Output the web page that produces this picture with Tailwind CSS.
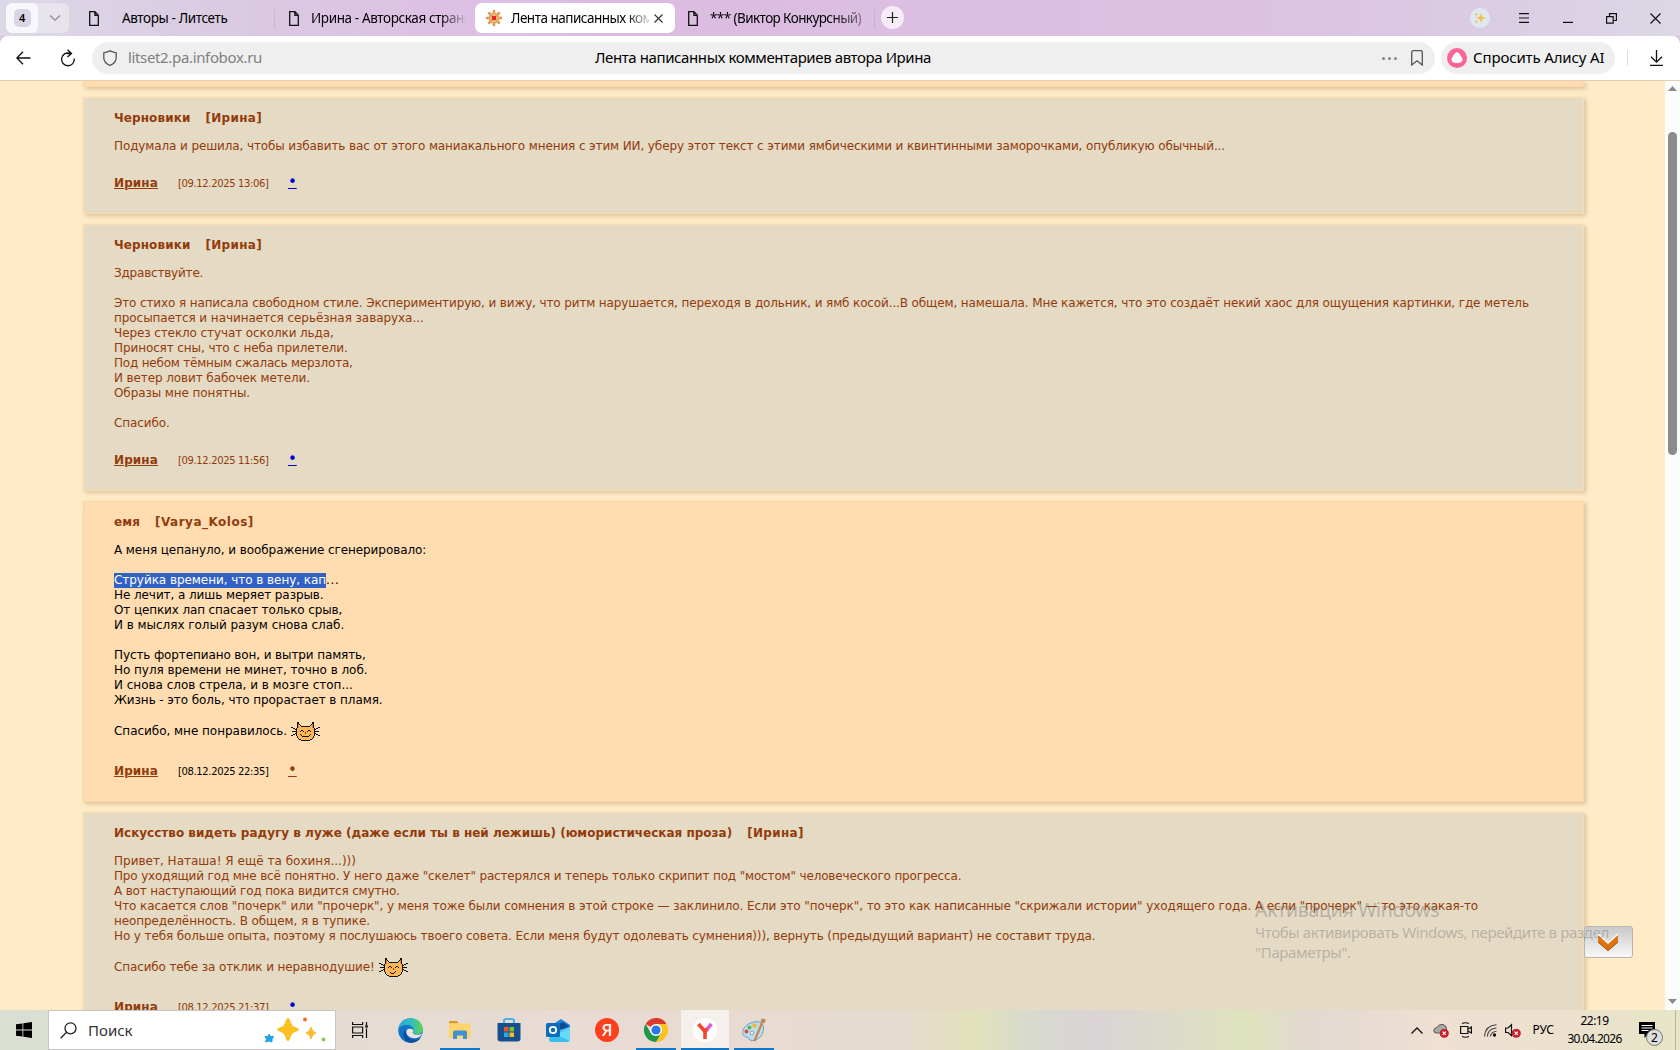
<!DOCTYPE html>
<html lang="ru">
<head>
    <meta charset="UTF-8">
    <meta name="viewport" content="width=device-width, initial-scale=1.0">
    <title>Лента написанных комментариев автора Ирина</title>
    <script src="https://cdn.jsdelivr.net/npm/@tailwindcss/browser@4"></script>
</head>
<body class="w-[1680px] h-[1050px] overflow-hidden bg-[#dcc0e3] font-['Noto_Sans',sans-serif] text-black flex flex-col">

    <!-- Shared shapes -->
    <svg class="hidden">
        <symbol id="page" viewBox="0 0 10 15"><path d="M.7.7h5.2l3.4 3.6v10H.7zM5.9.7v3.6h3.4" fill="none" stroke="#111" stroke-width="1.3"/></symbol>
        <symbol id="cat" viewBox="0 0 29 19">
            <path d="M6 1h1l4 3h7l4-3h1v5l1 3-1 5-4 4h-9l-4-4-1-5 1-3z" fill="#fdb853"/>
            <path d="M7.500 2v4M21.500 2v4" stroke="#e8822a"/>
            <path d="M6.500 0v6M7.500 0v2M8.500 2v1M9.500 3v1M10 4.500h9M22.500 0v6M21.500 0v2M20.500 2v1M19.500 3v1M5.500 6v8M23.500 6v8M6.500 14v2M22.500 14v2M7.500 16v1M21.500 16v1M8 17.500h2M19 17.500h2M10 18.500h9" fill="none" stroke="#111"/>
            <path d="M0 5.500h2M2 6.500h2M4 7.500h1M1 9.500h4M0 13.500h2M2 12.500h2M4 11.500h1M29 5.500h-2M27 6.500h-2M25 7.500h-1M28 9.500h-4M29 13.500h-2M27 12.500h-2M25 11.500h-1" stroke="#111"/>
            <path d="M9 9.500h1M10 8.500h2M12 9.500h1M16 9.500h1M17 8.500h2M19 9.500h1" stroke="#111"/>
            <path d="M14 10.500h1M14.500 11v1" fill="none" stroke="#8c3c10"/>
        </symbol>
        <symbol id="off" viewBox="0 0 10 10"><circle cx="5" cy="5" r="4.800" fill="#c8202f"/><path d="M3.300 3.300l3.400 3.400M6.700 3.300l-3.400 3.400" stroke="#fff" stroke-width="1.200"/></symbol>
    </svg>

    <!-- Tab strip -->
    <header class="h-9 shrink-0 flex items-start pt-[3px] bg-[linear-gradient(90deg,#dcd8e6_0,#dac9e2_250px,#ddc1e4_420px,#dcbce1_650px,#dcc2e3_1300px,#dacde3_1500px,#dcd8e5_1680px)] text-[13.500px] tracking-[-0.38px] whitespace-nowrap">
        <div class="ml-1.5 w-[63px] h-[30px] rounded-md bg-[#e8e4ee] flex items-center">
            <div class="w-8 h-[30px] rounded-md bg-[#f8f7fb] flex items-center justify-center">
                <span class="w-[17px] h-[18px] rounded-[5px] bg-[#dad6e6] text-[11px] font-semibold leading-[18px] text-center">4</span>
            </div>
            <svg class="w-3 h-2 ml-[11px]" viewBox="0 0 12 8"><path d="M1 1.500l5 4.700 5-4.700" fill="none" stroke="#8d8a95" stroke-width="1.300"/></svg>
        </div>
        <div class="ml-5 w-[185px] h-[30px] flex items-center">
            <svg class="w-2.5 h-[15px]"><use href="#page"/></svg>
            <span class="ml-[23px]">Авторы - Литсеть</span>
        </div>
        <div class="w-px h-5 mt-1.5 bg-[#c9b8d2]"></div>
        <div class="w-[200px] h-[30px] pl-3.5 flex items-center">
            <svg class="w-2.5 h-[15px] shrink-0"><use href="#page"/></svg>
            <span class="ml-3 w-[155px] overflow-hidden [mask-image:linear-gradient(90deg,#000_130px,transparent_156px)]">Ирина - Авторская страница</span>
        </div>
        <div class="w-[200px] h-[30px] rounded-[7px] bg-white flex items-center pl-[11px]">
            <svg class="w-4 h-4 shrink-0" viewBox="0 0 16 16">
                <path d="M8 0v16M0 8h16M2.300 2.300l11.400 11.400M13.700 2.300L2.300 13.700" stroke="#df9448" stroke-width="2.400"/>
                <circle cx="8" cy="8" r="5.500" fill="#e9a75c"/><rect x="6" y="6" width="4" height="4" fill="#e3262b"/><path d="M4.500 8h1M10.500 8h1M8 4.500v1M8 10.500v1" stroke="#fff"/>
            </svg>
            <span class="ml-[9px] w-[138px] overflow-hidden tracking-[-0.5px] [mask-image:linear-gradient(90deg,#000_115px,transparent_142px)]">Лента написанных комментариев</span>
            <svg class="w-[9px] h-[9px] ml-[5px]" viewBox="0 0 9 9"><path d="M.5.5l8 8M8.500.5l-8 8" stroke="#333" stroke-width="1.100"/></svg>
        </div>
        <div class="w-[199px] h-[30px] pl-[13px] flex items-center">
            <svg class="w-2.5 h-[15px] shrink-0"><use href="#page"/></svg>
            <span class="ml-3 w-[152px] overflow-hidden tracking-[-0.58px] [mask-image:linear-gradient(90deg,#000_120px,rgba(0,0,0,0.4)_152px)]">*** (Виктор Конкурсный)</span>
        </div>
        <div class="w-px h-5 mt-1.5 bg-[#c9b0d0]"></div>
        <div class="ml-1.5 mt-[3px] w-[23px] h-[23px] rounded-full bg-[#f5ecf7] flex items-center justify-center">
            <svg class="w-[11px] h-[11px]" viewBox="0 0 11 11"><path d="M5.500 0v11M0 5.500h11" stroke="#222" stroke-width="1.200"/></svg>
        </div>
        <div class="ml-auto h-[30px] flex items-center">
            <div class="w-5 h-5 rounded-full bg-[#dfe8ec] flex items-center justify-center">
                <svg class="w-3 h-3" viewBox="0 0 12 12"><path d="M7 1l1.200 3.800L12 6 8.200 7.200 7 11 5.800 7.200 2 6l3.800-1.200zM2.300.5l.5 1.300 1.300.5-1.300.5-.5 1.300-.5-1.300L.5 2.300l1.300-.5zM2.300 8l.5 1.300 1.300.5-1.300.5-.5 1.300-.5-1.300-1.300-.5 1.300-.5z" fill="#f2bd4c"/></svg>
            </div>
            <svg class="h-2.5 w-[10px] ml-[29px]" viewBox="0 0 10 10"><path d="M0 .6h10M0 5h10M0 9.400h10" stroke="#111" stroke-width="1.100"/></svg>
            <svg class="w-2.5 h-2.5 ml-[34px]" viewBox="0 0 10 10"><path d="M0 9.400h10" stroke="#000" stroke-width="1.200"/></svg>
            <svg class="w-[11px] h-[11px] ml-[33px]" viewBox="0 0 11 11"><path d="M.6 3.600h6.600v6.600H.6zM3.500 3.500V.6h6.900v6.900H7.300" fill="none" stroke="#111" stroke-width="1.200"/></svg>
            <svg class="w-[11px] h-[11px] ml-[33px] mr-[19px]" viewBox="0 0 11 11"><path d="M.5.5l10 10M10.500.5l-10 10" stroke="#111" stroke-width="1.200"/></svg>
        </div>
    </header>

    <!-- Toolbar -->
    <div class="h-11 shrink-0 bg-white rounded-t-lg flex items-center text-[15px] whitespace-nowrap">
        <svg class="w-[15px] h-[14px] ml-4" viewBox="0 0 15 14"><path d="M14.500 7H1M7 .8L.9 7 7 13.200" fill="none" stroke="#111" stroke-width="1.300"/></svg>
        <svg class="w-4 h-[18px] ml-[29px]" viewBox="0 0 16 18"><path d="M9.800 4.200A6.400 6.400 0 1 0 14.300 9.500M6.500 4.500h4.700M7.500.8l4 3.700-4 3.600" fill="none" stroke="#111" stroke-width="1.300"/></svg>
        <div class="ml-4 w-[1343px] h-8 rounded-2xl bg-[#efefef] flex items-center pl-[11px] pr-3">
            <svg class="w-[14px] h-4" viewBox="0 0 14 16"><path d="M7 .8c2 1 4 1.500 6.200 2V8c0 3.500-3 6-6.200 7.300C3.800 14 .8 11.500.8 8V2.800C3 2.300 5 1.800 7 .8z" fill="none" stroke="#555" stroke-width="1.300"/></svg>
            <span class="ml-[11px] -mt-px w-[467px] text-[#808080] tracking-[-0.35px]">litset2.pa.infobox.ru</span>
            <span class="-mt-px tracking-[-0.4px]">Лента написанных комментариев автора Ирина</span>
            <span class="ml-auto flex gap-[3px]"><i class="w-[3px] h-[3px] rounded-full bg-[#888]"></i><i class="w-[3px] h-[3px] rounded-full bg-[#888]"></i><i class="w-[3px] h-[3px] rounded-full bg-[#888]"></i></span>
            <svg class="w-3 h-4 ml-[14px]" viewBox="0 0 12 16"><path d="M.7 15V2.500Q.7.7 2.500.7h7q1.800 0 1.800 1.800V15L6 10.800z" fill="none" stroke="#555" stroke-width="1.300"/></svg>
        </div>
        <div class="ml-1.5 w-[174px] h-8 rounded-2xl bg-[#efefef] flex items-center pl-1.5">
            <svg class="w-5 h-5" viewBox="0 0 20 20"><circle cx="10" cy="10" r="10" fill="#fa6496"/><path d="M10 4.200c1.600 0 2.400 1 3.800 3.500 1.500 2.600 2.200 3.800 1.300 5.300S12.500 15 10 15s-4.200-.5-5.100-2-.2-2.700 1.300-5.300C7.600 5.200 8.400 4.200 10 4.200z" fill="#fff"/></svg>
            <span class="ml-1.5 -mt-px tracking-[-0.14px]">Спросить Алису AI</span>
        </div>
        <div class="ml-3 w-px h-4 bg-[#ddd]"></div>
        <svg class="w-[13px] h-4 ml-[22px]" viewBox="0 0 13 16"><path d="M6.500 0v12M1 6.800l5.500 5.400L12 6.800M0 15.300h13" fill="none" stroke="#111" stroke-width="1.300"/></svg>
    </div>

    <!-- Page -->
    <main class="h-[930px] shrink-0 overflow-hidden flex bg-[#ffebc8] border-t border-[#e4cfae] relative">
        <div class="w-[1501px] ml-[83px] flex flex-col gap-2.5 font-['DejaVu_Sans',sans-serif] text-[12px] leading-[15px] tracking-[-0.1px] whitespace-nowrap text-[#933b0b]">
            <article class="h-[6px] shrink-0 bg-[#ffddb1] border border-t-0 border-[#fbd7a6] shadow-[2px_2px_4px_rgba(150,100,50,0.3)]"></article>

            <article class="h-[117px] shrink-0 bg-[#e5dac4] border border-[#fbdcae] shadow-[2px_2px_4px_rgba(150,100,50,0.3)] pl-[30px] pt-[13px]">
                <h3 class="font-bold tracking-[0.1px] flex gap-[15px]"><span>Черновики</span><span class="tracking-[0.3px]">[Ирина]</span></h3>
                <p class="mt-[13px] tracking-[-0.113px]">Подумала и решила, чтобы избавить вас от этого маниакального мнения с этим ИИ, уберу этот текст с этими ямбическими и квинтинными заморочками, опубликую обычный...</p>
                <div class="mt-[22px] flex"><b class="underline tracking-[0.1px] w-16">Ирина</b><span class="text-[10px] tracking-[-0.36px] w-[110px]">[09.12.2025 13:06]</span><span class="underline decoration-1 text-[15px] -mt-px text-[#0000d8]">•</span></div>
            </article>

            <article class="h-[267px] shrink-0 bg-[#e5dac4] border border-[#fbdcae] shadow-[2px_2px_4px_rgba(150,100,50,0.3)] pl-[30px] pt-[13px]">
                <h3 class="font-bold tracking-[0.1px] flex gap-[15px]"><span>Черновики</span><span class="tracking-[0.3px]">[Ирина]</span></h3>
                <p class="mt-[13px]"><span class="tracking-[-0.2px]">Здравствуйте.</span><br><br>
                    <span class="tracking-[-0.126px]">Это стихо я написала свободном стиле. Экспериментирую, и вижу, что ритм нарушается, переходя в дольник, и ямб косой...В общем, намешала. Мне кажется, что это создаёт некий хаос для ощущения картинки, где метель</span><br>
                    <span class="tracking-[-0.06px]">просыпается и начинается серьёзная заваруха...</span><br>
                    Через стекло стучат осколки льда,<br>
                    Приносят сны, что с неба прилетели.<br>
                    <span class="tracking-[-0.21px]">Под небом тёмным сжалась мерзлота,</span><br>
                    И ветер ловит бабочек метели.<br>
                    Образы мне понятны.<br><br>
                    Спасибо.</p>
                <div class="mt-[22px] flex"><b class="underline tracking-[0.1px] w-16">Ирина</b><span class="text-[10px] tracking-[-0.36px] w-[110px]">[09.12.2025 11:56]</span><span class="underline decoration-1 text-[15px] -mt-px text-[#0000d8]">•</span></div>
            </article>

            <article class="h-[301px] shrink-0 bg-[#ffddb1] border border-[#fbd7a6] shadow-[2px_2px_4px_rgba(150,100,50,0.3)] pl-[30px] pt-[13px]">
                <h3 class="font-bold tracking-[0.1px] flex gap-[15px]"><span>емя</span><span class="tracking-[0.5px]">[Varya_Kolos]</span></h3>
                <p class="mt-[13px] text-black tracking-[-0.08px]">А меня цепануло, и воображение сгенерировало:<br><br>
                    <span class="inline-block h-[15px] align-top bg-[#3161c4] text-white tracking-[-0.05px]">Струйка времени, что в вену, кап</span><span class="tracking-[0.6px]">...</span><br>
                    Не лечит, а лишь меряет разрыв.<br>
                    <span class="tracking-[-0.12px]">От цепких лап спасает только срыв,</span><br>
                    <span class="tracking-[-0.03px]">И в мыслях голый разум снова слаб.</span><br><br>
                    <span class="tracking-[-0.11px]">Пусть фортепиано вон, и вытри память,</span><br>
                    <span class="tracking-[-0.04px]">Но пуля времени не минет, точно в лоб.</span><br>
                    <span class="tracking-[-0.02px]">И снова слов стрела, и в мозге стоп...</span><br>
                    Жизнь - это боль, что прорастает в пламя.</p>
                <div class="mt-4 h-[18px] flex text-black"><span class="tracking-[-0.03px] w-[177px]">Спасибо, мне понравилось.</span>
                    <svg class="w-[29px] h-[19px] -mt-0.5" viewBox="0 0 29 19" shape-rendering="crispEdges"><use href="#cat"/><path d="M9 12.500h1M19 12.500h1M10 13.500h1M18 13.500h1M11 14.500h7" stroke="#111"/></svg>
                </div>
                <div class="mt-[22px] flex"><b class="underline tracking-[0.1px] w-16">Ирина</b><span class="text-[10px] tracking-[-0.36px] w-[110px] text-black">[08.12.2025 22:35]</span><span class="underline decoration-1 text-[15px] -mt-px">•</span></div>
            </article>

            <article class="h-[300px] shrink-0 bg-[#e5dac4] border border-[#fbdcae] shadow-[2px_2px_4px_rgba(150,100,50,0.3)] pl-[30px] pt-[13px]">
                <h3 class="font-bold tracking-normal flex gap-[15px]"><span>Искусство видеть радугу в луже (даже если ты в ней лежишь) (юмористическая проза)</span><span class="tracking-[0.3px]">[Ирина]</span></h3>
                <p class="mt-[13px]"><span class="tracking-[0.01px]">Привет, Наташа! Я ещё та бохиня...)))</span><br>
                    <span class="tracking-[-0.155px]">Про уходящий год мне всё понятно. У него даже "скелет" растерялся и теперь только скрипит под "мостом" человеческого прогресса.</span><br>
                    <span class="tracking-[-0.17px]">А вот наступающий год пока видится смутно.</span><br>
                    <span class="tracking-[-0.088px]">Что касается слов "почерк" или "прочерк", у меня тоже были сомнения в этой строке — заклинило. Если это "почерк", то это как написанные "скрижали истории" уходящего года. А если "прочерк" — то это какая-то</span><br>
                    неопределённость. В общем, я в тупике.<br>
                    <span class="tracking-[-0.115px]">Но у тебя больше опыта, поэтому я послушаюсь твоего совета. Если меня будут одолевать сумнения))), вернуть (предыдущий вариант) не составит труда.</span></p>
                <div class="mt-4 h-[18px] flex"><span class="tracking-[-0.13px] w-[265px]">Спасибо тебе за отклик и неравнодушие!</span>
                    <svg class="w-[29px] h-[19px] -mt-0.5" viewBox="0 0 29 19" shape-rendering="crispEdges"><use href="#cat"/><path d="M11 14.500h1M12 15.500h3M15 14.500h1M16 13.500h1" stroke="#111"/></svg>
                </div>
                <div class="mt-[22px] flex"><b class="underline tracking-[0.1px] w-16">Ирина</b><span class="text-[10px] tracking-[-0.36px] w-[110px]">[08.12.2025 21:37]</span><span class="underline decoration-1 text-[15px] -mt-px text-[#0000d8]">•</span></div>
            </article>
        </div>

        <!-- Scrollbar -->
        <div class="ml-auto w-[15px] bg-[#fcfcfc] flex flex-col items-center pt-[5px] pb-1.5">
            <svg class="w-[9px] h-[5px]" viewBox="0 0 9 5"><path d="M0 5L4.500 0 9 5z" fill="#8a8a8a"/></svg>
            <div class="mt-[41px] w-[9px] h-[323px] rounded-full bg-[#8b8b8b]"></div>
            <svg class="w-[9px] h-[5px] mt-auto" viewBox="0 0 9 5"><path d="M0 0h9L4.500 5z" fill="#8a8a8a"/></svg>
        </div>

        <!-- Scroll down button -->
        <div class="absolute left-[1584px] top-[845px] w-[49px] h-[32px] rounded-[3px] border border-[#b9b5ad] bg-linear-to-b from-[#c9c9c9] to-[#f8f8f8] flex items-center justify-center pr-px">
            <svg class="w-5 h-[18px]" viewBox="0 0 20 18"><path d="M0 1l10 9L20 1v8l-10 9L0 9z" fill="#df7411"/><path d="M0 1l10 9L20 1" fill="none" stroke="#fff" stroke-width="1.500"/><path d="M0 9l10 8.500L20 9" fill="none" stroke="#a04d08"/></svg>
        </div>

        <!-- Activation watermark -->
        <div class="absolute left-[1255px] top-[816px] text-[#7d7d7d]/45 whitespace-nowrap">
            <div class="text-[19.500px] leading-[26px] tracking-[-0.3px]">Активация Windows</div>
            <div class="-mt-px text-[15px] leading-5 tracking-[-0.37px]">Чтобы активировать Windows, перейдите в раздел<br>"Параметры".</div>
        </div>
    </main>

    <!-- Taskbar -->
    <footer class="h-10 shrink-0 flex items-center bg-[linear-gradient(90deg,#d9dfd3_0,#e4dcd2_340px,#e8dbd4_600px,#e6dbd0_900px,#e1e2bb_975px,#d7dacd_1030px,#d9d3d5_1090px,#dcdcc8_1180px,#dee3bd_1245px,#e2d9d1_1310px,#efe0d2_1440px,#ece1cf_1560px,#e6e6c6_1680px)]">
        <svg class="w-4 h-4 ml-4" viewBox="0 0 16 16"><path d="M0 2.300L6.500 1.400v6.200H0zM7.300 1.200L16 0v7.600H7.300zM0 8.400h6.500v6.200L0 13.700zM7.300 8.400H16V16l-8.700-1.200z" fill="#000"/></svg>
        <div class="ml-4 w-[288px] h-10 bg-white border border-[#c6c6c6] flex items-center pl-[11px]">
            <svg class="w-[17px] h-[17px]" viewBox="0 0 17 17"><circle cx="10.500" cy="6.300" r="5.500" fill="none" stroke="#222" stroke-width="1.300"/><path d="M6.600 10.200L.6 16.300" stroke="#222" stroke-width="1.300"/></svg>
            <span class="ml-[11px] text-[15px] text-[#333]">Поиск</span>
            <svg class="ml-auto mr-[9px] w-[62px] h-[26px]" viewBox="0 0 62 26">
                <path d="M24 1q1.500 0 3 5 1 3 4 4 4 1.300 4 2.500t-4 2.500q-3 1-4 4-1.500 5-3 5t-3-5q-1-3-4-4-4-1.300-4-2.500t4-2.500q3-1 4-4 1.500-5 3-5z" fill="#fcc121"/>
                <path d="M47 10q1 5 5 6-4 1-5 6-1-5-5-6 4-1 5-6z" fill="#fbb92c" stroke="#fbb92c" stroke-linejoin="round"/>
                <path d="M5 17l1.500 2.500 3 0-1.500 3 0 2.500-3-1-3.500 1 1-3-1.500-2.500 3 0z" fill="#1da4e8" stroke="#1da4e8" stroke-linejoin="round"/>
                <circle cx="41" cy="2.500" r="2" fill="#ee6c3a"/><circle cx="59.500" cy="22.500" r="2" fill="#8ccb53"/>
            </svg>
        </div>
        <svg class="w-4 h-4 ml-4" viewBox="0 0 16 16"><path d="M.6 0v2.500h10V0M.6 16v-2.500h10V16M.6 5h10v6H.6zM14.500 0v3M14.500 6.500V16" fill="none" stroke="#111" stroke-width="1.200"/><path d="M13.300 3.200h2.500v2.500h-2.500z" fill="#111"/></svg>
        <svg class="w-[25px] h-[25px] ml-[30px]" viewBox="0 0 25 25">
            <defs><linearGradient id="e1" x2="1"><stop offset="0" stop-color="#2aa7e4"/><stop offset=".6" stop-color="#35c1b5"/><stop offset="1" stop-color="#64d34c"/></linearGradient></defs>
            <circle cx="12.500" cy="12.500" r="12.200" fill="#1273c9"/>
            <path d="M.5 11C1.500 4.500 6.500.3 12.500.3c7 0 12.200 5 12.200 10.200 0 4-3 6-6.200 6-2.600 0-4-.8-3.800-1.800.2-.7 1-1.200 1-2.700C15.700 9 12.500 7 9 7 5 7 2 8.500.5 11z" fill="url(#e1)"/>
            <path d="M8.200 12.500c-1 5 3 9.500 8 9.300 2.800 0 5-.8 6.800-2.300-2.300 3.700-6.500 5.500-11 5.200-4-.8-7-4.500-6.700-8.200.2-2.300 1.300-4 2.900-4z" fill="#0c4f9b"/>
            <path d="M8.500 12.500c1-2.500 6-2.500 7 0-.2 1.300-1 1.500-.8 2.500.3 1 2 1.800 4.500 1.800 2 0 3.500-.7 4.700-1.600-.3 2.500-3 4.800-6.900 5-5 .1-9.500-3-8.500-7.700z" fill="#f0e3dc"/>
        </svg>
        <div class="ml-[17px] w-10 h-10 flex flex-col items-center pt-[10px] border-b-2 border-[#1478c8]">
            <svg class="w-[22px] h-5" viewBox="0 0 22 20"><path d="M0 1h8l2 2.500H0z" fill="#d79c22"/><path d="M0 3.500h21.500V18H0z" fill="#fdd56a"/><path d="M4 19v-6.500q0-2 2-2h10q2 0 2 2V19h-4v-3.500H8V19z" fill="#3f92d2"/></svg>
        </div>
        <svg class="w-6 h-6 ml-[17px]" viewBox="0 0 24 24"><path d="M7 6V3q0-2 2-2h6q2 0 2 2v3" fill="none" stroke="#45b3e8" stroke-width="2"/><path d="M.5 5h23v15.500q0 3-3 3h-17q-3 0-3-3z" fill="#17508f"/><path d="M7 9h4.500v4.500H7z" fill="#f1512b"/><path d="M12.500 9H17v4.500h-4.500z" fill="#80c12d"/><path d="M7 14.500h4.500V19H7z" fill="#2ba9ea"/><path d="M12.500 14.500H17V19h-4.500z" fill="#fdba1b"/></svg>
        <svg class="w-6 h-[23px] ml-[25px]" viewBox="0 0 24 23"><path d="M6 6l9-6 9 6v4L14 16 6 12z" fill="#1489d8"/><path d="M12 5l5-2 6 4-9 6z" fill="#0c4b94"/><path d="M6 13l18-5v12q0 3-3 3H5q-2 0-2-3z" fill="#38bff0"/><path d="M24 8v14L10 16z" fill="#68d8f8"/><rect y="4" width="14" height="14" rx="1.500" fill="#0f6cbd"/><circle cx="7" cy="11" r="3.200" fill="none" stroke="#fff" stroke-width="1.800"/></svg>
        <div class="ml-[25px] w-6 h-6 rounded-full bg-[#fc3f1d] text-white text-[17px] leading-6 font-medium text-center">Я</div>
        <div class="ml-[17px] w-10 h-10 flex flex-col items-center pt-2 border-b-2 border-[#1478c8]">
            <svg class="w-6 h-6" viewBox="0 0 24 24"><path d="M12 12L1.600 6A12 12 0 0 1 22.400 6z" fill="#db3b2c"/><path d="M12 12V6h10.400A12 12 0 0 1 12 24z" fill="#fcc31e"/><path d="M12 12l5.200 3L12 24A12 12 0 0 1 1.600 6L6.800 15z" fill="#229547"/><path d="M12 6h10.400A12 12 0 0 0 12 0z" fill="#db3b2c"/><circle cx="12" cy="12" r="6" fill="#fff"/><circle cx="12" cy="12" r="4.600" fill="#2b78e8"/></svg>
        </div>
        <div class="ml-[5px] w-12 h-10 bg-[#f6f0ec] flex flex-col items-center pt-2 border-b-2 border-[#1478c8]">
            <svg class="w-6 h-6" viewBox="0 0 24 24"><circle cx="12" cy="12" r="12" fill="#fff"/><path d="M5.500 6l6.500 7.500V21" fill="none" stroke="#f4452b" stroke-width="3.600"/><path d="M12 13.500L18.500 6" stroke="#e35bd0" stroke-width="3.600"/><path d="M11.500 14l2.700-3" stroke="#f4452b" stroke-width="3.600"/></svg>
        </div>
        <div class="ml-[5px] w-10 h-10 flex flex-col items-center pt-2 border-b-2 border-[#1478c8]">
            <svg class="w-6 h-6" viewBox="0 0 24 24"><path d="M12 4c6-1.500 10 1.500 9.500 7.500S16 22.500 10 22.500c-3.500 0-3-3-5.500-3.500S0 17 .8 13C2 8 7 5 12 4z" fill="#b9dcef" stroke="#6f9fbe"/><circle cx="4.500" cy="13.500" r="1.900" fill="#dd4a3c"/><circle cx="7.500" cy="9.500" r="2" fill="#59b64b"/><circle cx="12.500" cy="7.500" r="2.200" fill="#f2b632"/><circle cx="10" cy="15" r="1.800" fill="#f4efe9" stroke="#7c99ab" stroke-width=".8"/><path d="M20 5l-7.500 18" stroke="#c98648" stroke-width="2.200"/><path d="M18.500 4q0-3 2-3.500l3 1q.5 2.500-2 4z" fill="#b98a58"/></svg>
        </div>

        <!-- Tray -->
        <div class="ml-auto h-10 flex items-center text-[12px]">
            <svg class="w-3 h-[7px]" viewBox="0 0 12 7"><path d="M.5 6.500L6 1l5.500 5.500" fill="none" stroke="#111" stroke-width="1.300"/></svg>
            <svg class="w-4 h-[15px] ml-2.5" viewBox="0 0 16 15"><path d="M3 10Q0 9.500 1 6.500 2 4.500 4 4.500 6 .5 10 1.500q3.500 1 3.500 4V10z" fill="#a9a9a9" stroke="#555"/><use href="#off" x="6.500" y="5.500" width="9.500" height="9.500"/></svg>
            <svg class="w-3 h-4 ml-[11px]" viewBox="0 0 12 16"><path d="M.6 4.500h7.300v7H.6zM8 7l3.400-2v6L8 9M2 1.500q3.500-1.500 7 0M2 14.500q3.500 1.500 7 0" fill="none" stroke="#111" stroke-width="1.200"/></svg>
            <svg class="w-[13px] h-[13px] ml-3" viewBox="0 0 13 13"><path d="M.5 12.500Q1 1.500 12.500.7M3.300 12.500Q4 4.500 12.500 4M6.300 12.500Q7 8 12.500 7.300" fill="none" stroke="#444" stroke-width="1.100"/><circle cx="10.500" cy="11" r="1.700" fill="#111"/></svg>
            <svg class="w-4 h-[15px] ml-2" viewBox="0 0 16 15"><path d="M.6 5h2.500L6.500 1.700v11L3.100 9.500H.6z" fill="none" stroke="#111" stroke-width="1.200"/><use href="#off" x="6.500" y="5.500" width="9.500" height="9.500"/></svg>
            <span class="ml-[11px]">РУС</span>
            <div class="ml-3 w-[57px] text-center leading-[18px]"><div class="tracking-[-0.5px]">22:19</div><div class="tracking-[-0.73px]">30.04.2026</div></div>
            <div class="relative ml-4 w-9 h-4">
                <svg class="w-4 h-4" viewBox="0 0 16 16"><path d="M0 0h16v12H9l-3.500 4v-4H0z" fill="#000"/><path d="M2.500 3.500h11M2.500 6h11M2.500 8.500h7" stroke="#fff"/></svg>
                <span class="absolute left-[7px] top-[7px] w-[17px] h-[17px] rounded-full bg-[#dedede] border border-[#777] text-center text-[12px] leading-[15px]">2</span>
            </div>
            <div class="w-px h-10 mr-1 bg-[#b5b0a5]"></div>
        </div>
    </footer>
</body>
</html>
